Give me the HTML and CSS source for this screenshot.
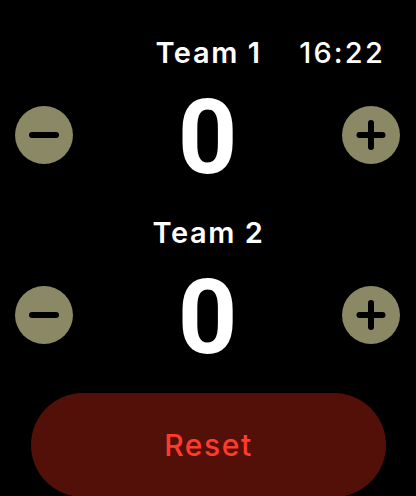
FILE: index.html
```html
<!DOCTYPE html>
<html>
<head>
<meta charset="utf-8">
<link rel="stylesheet" href="styles.css">
</head>
<body>
<div class="screen">
  <div class="header">
    <span></span>
    <span class="team">Team 1</span>
    <span class="time">16:22</span>
  </div>
  <div class="row">
    <div class="btn"><svg width="58" height="58" viewBox="0 0 58 58"><line x1="17" y1="29" x2="41" y2="29" stroke="#000" stroke-width="6" stroke-linecap="round"/></svg></div>
    <div class="score">0</div>
    <div class="btn"><svg width="58" height="58" viewBox="0 0 58 58"><line x1="17.5" y1="29" x2="40.5" y2="29" stroke="#000" stroke-width="6" stroke-linecap="round"/><line x1="29" y1="17" x2="29" y2="41" stroke="#000" stroke-width="6" stroke-linecap="round"/></svg></div>
  </div>
  <div class="header second">
    <span></span>
    <span class="team">Team 2</span>
    <span></span>
  </div>
  <div class="row">
    <div class="btn"><svg width="58" height="58" viewBox="0 0 58 58"><line x1="17" y1="29" x2="41" y2="29" stroke="#000" stroke-width="6" stroke-linecap="round"/></svg></div>
    <div class="score">0</div>
    <div class="btn"><svg width="58" height="58" viewBox="0 0 58 58"><line x1="17.5" y1="29" x2="40.5" y2="29" stroke="#000" stroke-width="6" stroke-linecap="round"/><line x1="29" y1="17" x2="29" y2="41" stroke="#000" stroke-width="6" stroke-linecap="round"/></svg></div>
  </div>
  <div class="reset">Reset</div>
</div>
</body>
</html>
```
FILE: styles.css
```css
html, body {
  margin: 0;
  padding: 0;
  background: #000;
  overflow: hidden;
}
.screen {
  width: 416px;
  height: 496px;
  padding-top: 38px;
  box-sizing: border-box;
  font-family: Inter, "Noto Sans", sans-serif;
  color: #fff;
}
.header {
  display: grid;
  grid-template-columns: 1fr auto 1fr;
  align-items: baseline;
  font-size: 29px;
  line-height: 29px;
  height: 29px;
}
.header.second {
  margin-top: 30px;
}
.team {
  font-weight: 600;
  letter-spacing: 1.6px;
  margin-left: 1px;
}
.time {
  justify-self: end;
  padding-right: 31px;
  font-weight: 500;
  letter-spacing: 2.2px;
}
.row {
  display: flex;
  justify-content: space-between;
  align-items: center;
  padding: 0 16px 0 15px;
  margin-top: 15px;
}
.btn {
  width: 58px;
  height: 58px;
  border-radius: 50%;
  background: #8b8865;
  display: flex;
}
.score {
  font-family: Roboto, Inter, sans-serif;
  font-size: 104px;
  line-height: 100px;
  font-weight: 700;
  margin-top: 6px;
}
.reset {
  margin: 25px 30px 0 31px;
  height: 104px;
  border-radius: 52px;
  background: #521009;
  color: #ff3b2c;
  font-size: 30px;
  font-weight: 500;
  letter-spacing: 1.6px;
  line-height: 104px;
  text-align: center;
}
```
